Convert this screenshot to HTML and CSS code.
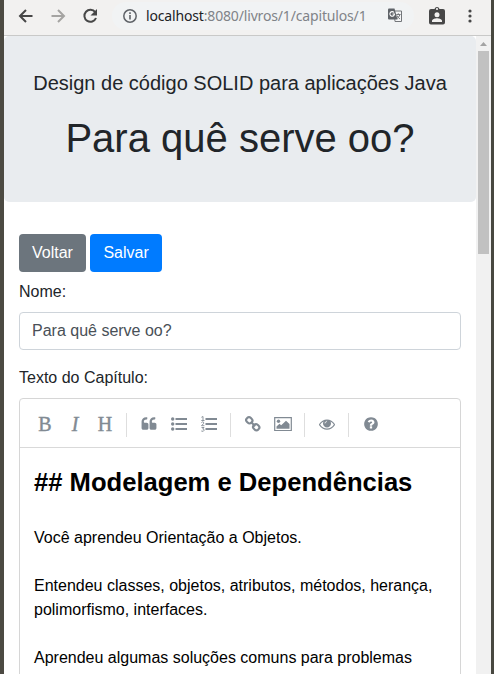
FILE: index.html
```html
<!DOCTYPE html>
<html lang="pt-BR">
<head>
<meta charset="utf-8">
<title>Para quê serve oo?</title>
<link rel="stylesheet" href="styles.css">
</head>
<body>
<div class="window">
  <header class="browser-bar">
    <svg class="nav" width="16" height="16" viewBox="0 0 16 16"><path d="M14.500 8H2.500M8 2L2 8l6 6" fill="none" stroke="#474747" stroke-width="2"/></svg>
    <svg class="nav" width="16" height="16" viewBox="0 0 16 16"><path d="M1.500 8h12M8 2l6 6-6 6" fill="none" stroke="#a5a4a2" stroke-width="2"/></svg>
    <svg class="nav" width="16" height="16" viewBox="0 0 16 16"><path d="M13.200 4.200A6 6 0 1 0 14 10" fill="none" stroke="#474747" stroke-width="2"/><path d="M15 1v6.500H8.500z" fill="#474747"/></svg>
    <div class="address">
      <svg width="16" height="16" viewBox="0 0 16 16"><circle cx="8" cy="8" r="6.200" fill="none" stroke="#5f6368" stroke-width="1.500"/><path d="M8 7v4.500M8 4.300v1.600" stroke="#5f6368" stroke-width="1.600"/></svg>
      <span class="url"><span class="host">localhost</span>:8080/livros/1/capitulos/1</span>
      <svg class="translate" width="15" height="15" viewBox="0 0 15 15"><path d="M6 3h7.500v10.500H7z" fill="#f5f6f7" stroke="#73767a"/><path d="M0 1.500Q0 .5 1 .5h5.500l3 11H1q-1 0-1-1z" fill="#5f6368"/><path d="M6 4.500A2.300 2.300 0 1 0 6.500 6H4.500" fill="none" stroke="#fff" stroke-width="1.100"/><path d="M8.300 6.500h4.200M10.300 5.300v1.200M12 6.500q-.8 2.800-3 4M9 7.500q1 2.200 3 3.500" fill="none" stroke="#73767a"/></svg>
    </div>
    <svg class="badge" width="16" height="19" viewBox="0 0 16 19"><path d="M2 3h3.500a2.600 2.600 0 0 1 5 0H14q2 0 2 2v11.500q0 2-2 2H2q-2 0-2-2V5q0-2 2-2z" fill="#474747"/><circle cx="8" cy="3" r="1.100" fill="#f2f1f0"/><circle cx="8" cy="8.800" r="2.500" fill="#f2f1f0"/><path d="M3 16v-1.200c0-1.800 3.300-2.600 5-2.600s5 .8 5 2.600V16z" fill="#f2f1f0"/></svg>
    <svg class="more" width="4" height="14" viewBox="0 0 4 14"><g fill="#474747"><circle cx="2" cy="2" r="1.600"/><circle cx="2" cy="7" r="1.600"/><circle cx="2" cy="12" r="1.600"/></g></svg>
  </header>
  <div class="viewport">
    <main class="page">
      <section class="jumbotron">
        <h5>Design de código SOLID para aplicações Java</h5>
        <h1>Para quê serve oo?</h1>
      </section>
      <div class="container">
        <div class="actions"><a class="btn secondary">Voltar</a><a class="btn primary">Salvar</a></div>
        <label class="label">Nome:</label>
        <div class="input">Para quê serve oo?</div>
        <label class="label">Texto do Capítulo:</label>
        <div class="editor">
          <div class="toolbar">
            <span class="tool letter">B</span>
            <span class="tool letter italic">I</span>
            <span class="tool letter">H</span>
            <i class="sep"></i>
            <span class="tool"><svg width="16" height="16" viewBox="0 0 1792 1792"><path d="M832 960v384q0 80-56 136t-136 56h-384q-80 0-136-56t-56-136v-704q0-104 40.500-198.500t109.500-163.500 163.500-109.500 198.500-40.500h64q26 0 45 19t19 45v128q0 26-19 45t-45 19h-64q-106 0-181 75t-75 181v32q0 40 28 68t68 28h224q80 0 136 56t56 136zm896 0v384q0 80-56 136t-136 56h-384q-80 0-136-56t-56-136v-704q0-104 40.500-198.500t109.500-163.500 163.500-109.500 198.500-40.500h64q26 0 45 19t19 45v128q0 26-19 45t-45 19h-64q-106 0-181 75t-75 181v32q0 40 28 68t68 28h224q80 0 136 56t56 136z"/></svg></span>
            <span class="tool"><svg width="16" height="16" viewBox="0 0 16 16"><circle cx="1.700" cy="3" r="1.700"/><circle cx="1.700" cy="8" r="1.700"/><circle cx="1.700" cy="13" r="1.700"/><path d="M4.500 2H16v2H4.500zM4.500 7H16v2H4.500zM4.500 12H16v2H4.500z"/></svg></span>
            <span class="tool"><svg width="16" height="16" viewBox="0 0 16 16"><path d="M4.500 2H16v2H4.500zM4.500 7H16v2H4.500zM4.500 12H16v2H4.500z"/><path d="M.4 1.300L2 .5V4.500M.3 4.500h3.200M.4 6.600Q1.500 5.400 2.600 6.200 3.500 7.400.5 9.700H3.400M.5 11.500H3L1.700 13q1.500 0 1.500 1.200Q2.700 16 .3 15" fill="none" stroke="#818a93" stroke-width=".9"/></svg></span>
            <i class="sep"></i>
            <span class="tool"><svg width="16" height="16" viewBox="0 0 16 16"><g fill="none" stroke="#818a93" stroke-width="2.100"><rect x="-3.100" y="-2.700" width="6.200" height="5.400" rx="2.300" transform="translate(4.300 4.300) rotate(45)"/><rect x="-3.100" y="-2.700" width="6.200" height="5.400" rx="2.300" transform="translate(11.200 11.200) rotate(45)"/><path d="M5.800 5.800l4.400 4.400"/></g></svg></span>
            <span class="tool"><svg width="18" height="16" viewBox="0 0 18 16"><path d="M.7 1.700h16.600v12.800H.7z" fill="none" stroke="#818a93" stroke-width="1.200"/><circle cx="4.500" cy="5.200" r="1.700"/><path d="M2.500 12.800v-2.300l3-2.800 1.700 1.600L12 4.700l3.500 3.400v4.700z"/></svg></span>
            <i class="sep"></i>
            <span class="tool"><svg width="16" height="16" viewBox="0 0 1792 1792"><path d="M1664 960q-152-236-381-353 61 104 61 225 0 185-131.500 316.500t-316.500 131.500-316.500-131.500-131.500-316.500q0-121 61-225-229 117-381 353 133 205 333.500 326.500t434.500 121.500 434.500-121.500 333.500-326.500zm-720-384q0-20-14-34t-34-14q-125 0-214.500 89.500t-89.500 214.500q0 20 14 34t34 14 34-14 14-34q0-86 61-147t147-61q20 0 34-14t14-34zm848 384q0 34-20 69-140 230-376.500 368.500t-499.500 138.500-499.500-139-376.500-368q-20-35-20-69t20-69q140-229 376.500-368t499.500-139 499.500 139 376.500 368q20 35 20 69z"/><circle cx="896" cy="832" r="330"/><path d="M680 832q0-216 216-216" fill="none" stroke="#fff" stroke-width="80"/></svg></span>
            <i class="sep"></i>
            <span class="tool"><svg width="16" height="16" viewBox="0 0 1792 1792"><path d="M1024 1376v-192q0-14-9-23t-23-9h-192q-14 0-23 9t-9 23v192q0 14 9 23t23 9h192q14 0 23-9t9-23zm256-672q0-88-55.500-163t-138.500-116-170-41q-243 0-371 213-15 24 8 42l132 100q7 6 19 6 16 0 25-12 53-68 86-92 34-24 86-24 48 0 85.500 26t37.500 59q0 38-20 61t-68 45q-63 28-115.500 86.500t-52.500 125.500v36q0 14 9 23t23 9h192q14 0 23-9t9-23q0-19 21.500-49.500t54.500-49.500q32-18 49-28.500t46-35 44.500-48 28-60.500 12.500-81zm384 192q0 209-103 385.500t-279.500 279.500-385.500 103-385.500-103-279.500-279.500-103-385.500 103-385.500 279.500-279.500 385.500-103 385.500 103 279.500 279.500 103 385.500z"/></svg></span>
          </div>
          <div class="content">
            <p class="heading">## Modelagem e Dependências</p>
            <p>Você aprendeu Orientação a Objetos.</p>
            <p>Entendeu classes, objetos, atributos, métodos, herança, polimorfismo, interfaces.</p>
            <p>Aprendeu algumas soluções comuns para problemas</p>
          </div>
        </div>
      </div>
    </main>
    <aside class="scrollbar">
      <svg width="15" height="15" viewBox="0 0 15 15"><path d="M4 10l3.500-4L11 10z" fill="#a3a3a3"/></svg>
      <div class="thumb"></div>
    </aside>
  </div>
</div>
</body>
</html>
```
FILE: styles.css
```css
* { box-sizing: border-box; }
html, body { height: 100%; overflow: hidden; }
body { margin: 0; font: 16px/24px "Liberation Sans", Arial, sans-serif; color: #212529; }
h1, h5, p { margin: 0; }

.window {
  height: 674px;
  display: flex;
  flex-direction: column;
  border-left: 4px solid #4c4a42;
  border-right: 3px solid #484840;
  background: #fff;
}

.browser-bar {
  height: 36px;
  flex: none;
  display: flex;
  align-items: center;
  padding: 0 19px 4px 14px;
  background: #f2f1f0;
  border-bottom: 1px solid #c9c9c8;
}
.browser-bar svg { flex: none; display: block; }
.nav { margin-right: 16px; }
.address {
  width: 302px;
  height: 28px;
  margin-left: -2px;
  padding: 0 11px 0 10px;
  display: flex;
  align-items: center;
  border-radius: 14px;
  background: #f1f3f4;
}
.url {
  flex: 1;
  padding-left: 8px;
  white-space: nowrap;
  font: 14px/20px "Noto Sans", "Open Sans", sans-serif;
  letter-spacing: -0.16px;
  color: #808388;
}
.host { color: #202124; }
.badge { margin-left: 15px; }
.more { margin-left: auto; }

.viewport { flex: 1; min-height: 0; display: flex; }
.page { flex: 1; min-width: 0; overflow: hidden; }
.scrollbar { width: 15px; background: #f1f1f1; }
.scrollbar svg { display: block; }
.thumb { width: 11px; height: 203px; margin: 0 auto; background: #c1c1c1; }

.jumbotron {
  height: 166px;
  padding: 35px 15px 0;
  margin-bottom: 32px;
  border-radius: 5px;
  background: #e9ecef;
  text-align: center;
}
h5 { font-size: 20px; line-height: 24px; font-weight: 400; }
h1 { margin-top: 19px; font-size: 40px; line-height: 48px; font-weight: 400; }

.container { padding: 0 15px; }
.actions { display: flex; gap: 4px; margin-bottom: 8px; }
.btn { padding: 7px 13px; border-radius: 4px; color: #fff; }
.secondary { background: #6c757d; }
.primary { padding: 7px 13.500px; background: #007bff; }
.label { display: block; margin-bottom: 8px; }
.input {
  height: 38px;
  padding: 6px 12px;
  margin-bottom: 16px;
  border: 1px solid #ced4da;
  border-radius: 4px;
  color: #495057;
}

.editor { border: 1px solid #d6d6d6; border-radius: 4px 4px 0 0; height: 400px; }
.toolbar {
  height: 49px;
  padding: 3px 10px 0;
  display: flex;
  align-items: center;
  border-bottom: 1px solid #d9d9d9;
}
.tool { width: 30px; height: 30px; padding-bottom: 1px; display: flex; align-items: center; justify-content: center; fill: #818a93; }
.letter { font: 20px/28px "Liberation Serif", serif; color: #818a93; -webkit-text-stroke: 0.4px #818a93; padding-bottom: 2px; }
.italic { font-style: italic; }
.sep { width: 1px; height: 24px; margin: 0 7px 0 6px; background: #dedede; }
.content { padding: 15px 14px; color: #000; }
.content p { margin-bottom: 24px; }
.content .heading { margin-bottom: 24.600px; font-size: 25.600px; line-height: 38.400px; font-weight: 700; white-space: nowrap; }
```
